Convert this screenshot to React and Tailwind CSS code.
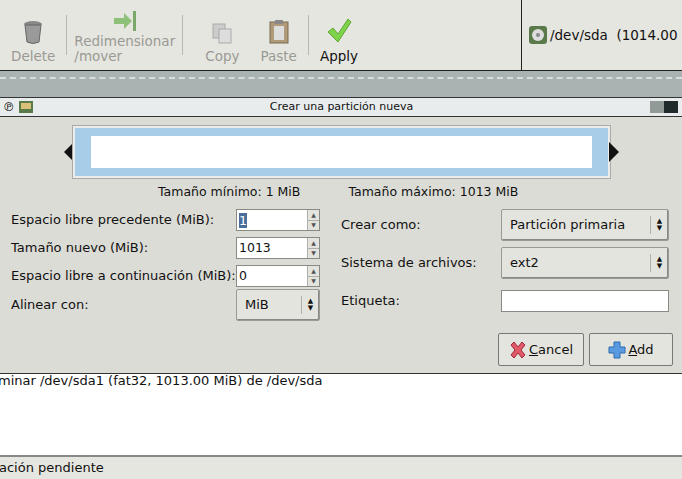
import React from 'react';

const font = { fontFamily: '"DejaVu Sans", sans-serif' };

const Spin = ({ value, sel }) => (
  <div className="flex h-[22px] w-[84px] border border-[#8a8a85] bg-white">
    <div className="flex-1 flex items-center pl-[2px] text-[12.5px]">
      {sel ? <span className="bg-[#4a6d9c] text-white leading-[15px]">{value}</span> : value}
    </div>
    <div className="w-[12px] flex flex-col border-l border-[#b0b0aa] bg-[#e4e4de] text-[6px] text-[#555] leading-none">
      <div className="flex-1 flex items-center justify-center border-b border-[#b0b0aa]">▲</div>
      <div className="flex-1 flex items-center justify-center">▼</div>
    </div>
  </div>
);

const Combo = ({ value, w }) => (
  <div className={`flex h-[32px] ${w} items-center border border-[#9a9a95] bg-[#e4e4de] rounded-[2px] shadow-[inset_-1px_-1px_0_#888]`}>
    <span className="flex-1 pl-[8px] text-[13px]">{value}</span>
    <span className="border-l border-[#b0b0aa] h-[18px] w-[18px] flex flex-col items-center justify-center text-[7px] leading-[7px]">
      <span>▲</span><span>▼</span>
    </span>
  </div>
);

const ToolBtn = ({ icon, label, dim }) => (
  <div className={`flex flex-col items-center justify-end h-full pb-[6px] px-[10px] text-[13.5px] ${dim ? 'text-[#9a9a95]' : 'text-[#111]'}`}>
    <div className="mb-[4px]">{icon}</div>
    <div className="leading-[15px] text-center">{label}</div>
  </div>
);

const Sep = () => <div className="w-px h-[40px] bg-[#b8b8b2] self-center" />;

export default function App() {
  return (
    <div style={font} className="w-[682px] h-[479px] overflow-hidden bg-[#dcdcd6] text-[#111] flex flex-col">
      {/* toolbar */}
      <div className="h-[71px] flex border-b border-[#222] bg-[#e6e6e0]">
        <div className="w-[522px] shrink-0 flex items-stretch border-r border-[#222] pl-[1px] gap-[1px]">
          <ToolBtn dim label="Delete" icon={
            <svg width="22" height="26" viewBox="0 0 22 26"><ellipse cx="11" cy="5" rx="9" ry="3" fill="#888" /><path d="M3 6 L5 23 Q11 26 17 23 L19 6 Z" fill="#9a9a9a" stroke="#666" /></svg>} />
          <Sep />
          <div className="flex flex-col justify-end h-full pb-[6px] px-[6px] text-[13.5px] text-[#9a9a95]">
            <div className="self-center mb-[2px]"><svg width="26" height="22" viewBox="0 0 26 22"><path d="M2 8h10V3l8 8-8 8v-5H2z" fill="#8fc07a" /><rect x="21" y="1" width="3" height="20" fill="#7aa86a" /></svg></div>
            <div className="leading-[15px]">Redimensionar</div>
            <div className="leading-[15px]">/mover</div>
          </div>
          <Sep />
          <div className="w-[10px]" />
          <ToolBtn dim label="Copy" icon={<svg width="24" height="24" viewBox="0 0 24 24"><rect x="3" y="3" width="12" height="14" fill="#ccc" stroke="#aaa" /><rect x="9" y="8" width="12" height="14" fill="#ddd" stroke="#aaa" /></svg>} />
          <ToolBtn dim label="Paste" icon={<svg width="24" height="26" viewBox="0 0 24 26"><rect x="3" y="3" width="18" height="21" fill="#b09a78" stroke="#7a6a50" /><rect x="7" y="7" width="10" height="14" fill="#ddd" /><rect x="8" y="1" width="8" height="4" fill="#888" /></svg>} />
          <Sep />
          <ToolBtn label="Apply" icon={<svg width="28" height="28" viewBox="0 0 28 28"><path d="M3 15l5-4 5 6L23 2l3 3-13 20z" fill="#7ed34a" stroke="#5aa830" /></svg>} />
        </div>
        <div className="flex-1 flex items-center pl-[6px] gap-[2px] text-[13.5px] whitespace-nowrap overflow-hidden">
          <svg className="shrink-0" width="20" height="20" viewBox="0 0 20 20"><rect x="1" y="1" width="18" height="18" rx="3" fill="#5a7a4a" /><circle cx="10" cy="10" r="6" fill="#ddd" /><circle cx="10" cy="10" r="2" fill="#888" /></svg>
          <span>/dev/sda&nbsp;&nbsp;(1014.00 MiB)</span>
        </div>
      </div>
      {/* gray band */}
      <div className="h-[26px] bg-[#a9b3b1] pt-[6px]">
        <div className="border-t-2 border-dashed border-[#d8dcdc]" />
      </div>
      {/* dialog title */}
      <div className="h-[20px] flex items-center border-y border-[#333] bg-[#e8ecec] px-[3px] text-[11px]">
        <span className="text-[12px] w-[16px]">℗</span>
        <svg width="14" height="12" viewBox="0 0 14 12"><rect width="14" height="12" fill="#5a7a4a" /><rect x="2" y="2" width="10" height="6" fill="#d9c17a" /></svg>
        <span className="flex-1 text-center">Crear una partición nueva</span>
        <span className="w-[14px] h-[12px] bg-[#929a98]" />
        <span className="w-[14px] h-[12px] bg-[#1f2a2a] mr-[1px]" />
      </div>
      {/* dialog body */}
      <div className="h-[257px] bg-[#dcdcd6] border-b border-[#333] flex flex-col">
        <div className="mt-[8px] flex items-center justify-center">
          <svg width="10" height="20" viewBox="0 0 10 20" className="mr-[-2px]"><path d="M10 0v20L0 10z" fill="#111" /></svg>
          <div className="w-[539px] h-[54px] border border-[#aaa] bg-[#ececea] p-[2px]">
            <div className="h-full bg-[#a8cde8] px-[16px] py-[8px]">
              <div className="h-full bg-white" />
            </div>
          </div>
          <svg width="10" height="20" viewBox="0 0 10 20" className="ml-[-2px]"><path d="M0 0v20L10 10z" fill="#111" /></svg>
        </div>
        <div className="flex text-[12.5px] mt-[4px] h-[18px] items-center">
          <span className="ml-[158px]">Tamaño mínimo: 1 MiB</span>
          <span className="ml-[48px]">Tamaño máximo: 1013 MiB</span>
        </div>
        <div className="flex mt-[8px] text-[13px]">
          <div className="w-[320px] pl-[11px] flex flex-col">
            <div className="h-[22px] flex items-center justify-between"><span>Espacio libre precedente (MiB):</span><Spin value="1" sel /></div>
            <div className="h-[22px] mt-[6px] flex items-center justify-between"><span>Tamaño nuevo (MiB):</span><Spin value="1013" /></div>
            <div className="h-[22px] mt-[6px] flex items-center justify-between"><span>Espacio libre a continuación (MiB):</span><Spin value="0" /></div>
            <div className="h-[28px] mt-[4px] flex items-center justify-between"><span>Alinear con:</span><Combo value="MiB" w="w-[84px]" /></div>
          </div>
          <div className="flex-1 pl-[21px] pr-[13px] flex flex-col">
            <div className="h-[32px] flex items-center justify-between"><span>Crear como:</span><Combo value="Partición primaria" w="w-[168px]" /></div>
            <div className="h-[32px] mt-[6px] flex items-center justify-between"><span>Sistema de archivos:</span><Combo value="ext2" w="w-[168px]" /></div>
            <div className="h-[24px] mt-[10px] flex items-center justify-between"><span>Etiqueta:</span><div className="w-[168px] h-[22px] bg-white border border-[#8a8a85]" /></div>
          </div>
        </div>
        <div className="flex justify-end gap-[5px] mt-[14px] pr-[9px] text-[13px]">
          <div className="w-[86px] h-[33px] flex items-center justify-center gap-[2px] bg-[#e4e4de] border border-[#777] rounded-[2px]">
            <svg width="18" height="18" viewBox="0 0 18 18"><path d="M2 4l3-3 4 5 4-5 3 3-4 5 4 5-3 3-4-5-4 5-3-3 4-5z" fill="#e05a6a" stroke="#a02a3a" /></svg>
            <span><u>C</u>ancel</span>
          </div>
          <div className="w-[84px] h-[33px] flex items-center justify-center gap-[2px] bg-[#e4e4de] border border-[#777] rounded-[2px]">
            <svg width="18" height="18" viewBox="0 0 18 18"><path d="M6 1h6v5h5v6h-5v5H6v-5H1V6h5z" fill="#5a9ae0" stroke="#2a6ab0" /></svg>
            <span><u>A</u>dd</span>
          </div>
        </div>
      </div>
      {/* log */}
      <div className="flex-1 bg-white text-[13px] -ml-[2px]">
        <div className="leading-[14px]">minar /dev/sda1 (fat32, 1013.00 MiB) de /dev/sda</div>
      </div>
      <div className="h-[24px] border-t-2 border-[#888] bg-[#e6e6e0] text-[13px] flex items-center -ml-[1px]">
        ación pendiente
      </div>
    </div>
  );
}
